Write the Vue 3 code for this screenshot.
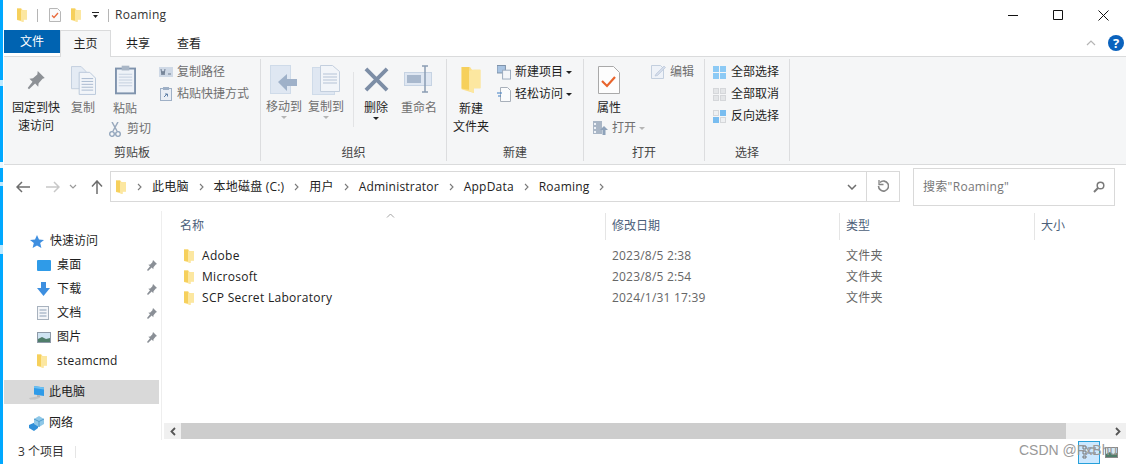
<script setup>
const navItems = [
  { label: '桌面', icon: 'desktop', pin: true },
  { label: '下载', icon: 'download', pin: true },
  { label: '文档', icon: 'doc', pin: true },
  { label: '图片', icon: 'pic', pin: true },
  { label: 'steamcmd', icon: 'folder', pin: false },
]

const files = [
  { name: 'Adobe', date: '2023/8/5 2:38', type: '文件夹' },
  { name: 'Microsoft', date: '2023/8/5 2:54', type: '文件夹' },
  { name: 'SCP Secret Laboratory', date: '2024/1/31 17:39', type: '文件夹' },
]

const crumbs = ['此电脑', '本地磁盘 (C:)', '用户', 'Administrator', 'AppData', 'Roaming']
</script>

<template>
  <div class="window">
    <svg width="0" height="0" class="defs">
      <symbol id="folder" viewBox="0 0 10 14">
        <path d="M0 0.5h4.500l1 1.500H10v9.500H6.500V14L0 12z" fill="#fbe08c" />
        <path d="M0 0.5h4v11.800l-4-.6z" fill="#f6d05c" />
        <path d="M4 2.500l2.800-.5H10v9.500H6.500V14L4 13z" fill="#fce7a0" />
      </symbol>
      <symbol id="pin" viewBox="0 0 12 12">
        <path d="M7 1l4 4-1.200.6-2.300 2.600-.2 2-1.600-1.600L2 12 1 11l3-3.700L2.300 5.700l2-.2 2.100-2.300z" fill="#8a8f96" />
      </symbol>
    </svg>

    <header class="titlebar">
      <svg class="qa folder-a" width="10" height="14"><use href="#folder" /></svg>
      <span class="qa-sep"></span>
      <svg class="qa" width="12" height="14" viewBox="0 0 12 14">
        <path d="M.5.500h8l3 3v10H.5z" fill="#fafafa" stroke="#b7b7b7" />
        <path d="M3 7.500l2 2 4-4.500" fill="none" stroke="#e8693a" stroke-width="1.300" />
      </svg>
      <svg class="qa folder-b" width="10" height="14"><use href="#folder" /></svg>
      <svg class="qa drop" width="8" height="8" viewBox="0 0 8 8">
        <path d="M0 1h7v1H0zM1 4h5L3.500 7z" fill="#222" />
      </svg>
      <span class="qa-sep second"></span>
      <span class="title">Roaming</span>
      <div class="win-btns">
        <svg width="11" height="11" viewBox="0 0 11 11"><path d="M0 5.500h10" stroke="#111" /></svg>
        <svg width="11" height="11" viewBox="0 0 11 11"><path d="M.5.500h9v9h-9z" fill="none" stroke="#111" /></svg>
        <svg width="11" height="11" viewBox="0 0 11 11"><path d="M.5.500l10 10M10.500.500l-10 10" stroke="#111" /></svg>
      </div>
    </header>

    <nav class="tabs">
      <span class="tab-file">文件</span>
      <span class="tab active">主页</span>
      <span class="tab share">共享</span>
      <span class="tab view">查看</span>
      <svg class="collapse" width="10" height="6" viewBox="0 0 10 6">
        <path d="M1 5l4-4 4 4" fill="none" stroke="#b5b5b5" stroke-width="1.200" />
      </svg>
      <span class="help">?</span>
    </nav>

    <section class="ribbon">
      <!-- 剪贴板 -->
      <div class="group g-clip">
        <div class="group-body">
          <div class="big pin-btn">
            <svg width="20" height="21" viewBox="0 0 22 24">
              <path d="M13 1l8 8-2.500 1-4.500 5-.5 4-3.500-3.500L3 22l-1.500-1.500L7 13.500 3.500 10l4-.5 5-4.500z" fill="#8d9196" />
            </svg>
            <span class="lbl dark">固定到快<br />速访问</span>
          </div>
          <div class="big copy-btn">
            <svg width="25" height="29" viewBox="0 0 26 30">
              <path d="M.5.500h10l5 5v18H.5z" fill="#e4ebf4" stroke="#c3cfde" />
              <path d="M8.500 6.500h11l6 6v17h-17z" fill="#f2f5f9" stroke="#b9c8db" />
              <path d="M11 13h12M11 16h12M11 19h12M11 22h12M11 25h12" stroke="#a9b9cf" />
            </svg>
            <span class="lbl">复制</span>
          </div>
          <div class="big paste-btn">
            <svg width="21" height="30" viewBox="0 0 22 30">
              <rect x="1" y="3" width="20" height="26" fill="#eef2f8" stroke="#7f93ad" stroke-width="2" />
              <rect x="7" y="0" width="8" height="5" fill="#a9b6c6" />
              <path d="M4 9h14M4 12h14M4 15h14M4 18h14M4 21h14" stroke="#c3cfde" />
            </svg>
            <span class="lbl">粘贴</span>
            <span class="cut">
              <svg width="12" height="15" viewBox="0 0 12 15">
                <path d="M3 0l5 9M9 0L4 9" stroke="#98a8bc" stroke-width="1.500" />
                <circle cx="3" cy="12" r="2.300" fill="none" stroke="#8ea2ba" stroke-width="1.300" />
                <circle cx="9" cy="12" r="2.300" fill="none" stroke="#8ea2ba" stroke-width="1.300" />
              </svg>
              <span class="lbl">剪切</span>
            </span>
          </div>
          <div class="small-col clip-small">
            <div class="small">
              <svg width="14" height="10" viewBox="0 0 14 10">
                <rect width="14" height="10" fill="#cfd9e6" />
                <path d="M2 2l1 6 1-4 1 4 1-6M9 7h3" stroke="#6f7e92" fill="none" />
              </svg>
              <span class="lbl">复制路径</span>
            </div>
            <div class="small">
              <svg width="14" height="14" viewBox="-1 0 14 14">
                <rect x=".5" y="1.500" width="11" height="12" fill="#e9eef5" stroke="#9fb0c6" />
                <rect x="3" y="0" width="6" height="3" fill="#9fb0c6" />
                <path d="M4 10l3-3M5 7h2.500v2.500" stroke="#5d7ea6" fill="none" />
              </svg>
              <span class="lbl">粘贴快捷方式</span>
            </div>
          </div>
        </div>
        <div class="group-title">剪贴板</div>
      </div>

      <!-- 组织 -->
      <div class="group g-org">
        <div class="group-body">
          <div class="big move-btn">
            <svg width="28" height="30" viewBox="0 0 28 30">
              <rect x=".5" y=".5" width="20" height="28" fill="#dfe7f2" stroke="#cfdbe9" />
              <path d="M8 17l9-8v5h10v7H17v5z" fill="#9fb1c9" />
            </svg>
            <span class="lbl">移动到</span>
            <i class="caret light"></i>
          </div>
          <div class="big copyto-btn">
            <svg width="28" height="30" viewBox="0 0 28 30">
              <rect x=".5" y="2.500" width="22" height="27" fill="#dfe7f2" stroke="#cfdbe9" />
              <path d="M8.500.500h12l7 6v20h-19z" fill="#f2f5f9" stroke="#c3cfde" />
              <path d="M11 9h14M11 12h14M11 15h14M11 18h14" stroke="#b5c3d6" />
            </svg>
            <span class="lbl">复制到</span>
            <i class="caret light"></i>
          </div>
          <span class="inner-sep"></span>
          <div class="big del-btn">
            <svg width="25" height="25" viewBox="0 0 26 26">
              <path d="M2 2l22 22M24 2L2 24" stroke="#7d8ea6" stroke-width="4" />
            </svg>
            <span class="lbl dark">删除</span>
            <i class="caret"></i>
          </div>
          <div class="big rename-btn">
            <svg width="30" height="28" viewBox="0 0 30 28">
              <rect x=".5" y="7.500" width="27" height="13" fill="#dfe7f2" stroke="#c6d3e3" />
              <rect x="3" y="10" width="14" height="8" fill="#a8b8cd" />
              <path d="M18 1h6M18 27h6M21 1v26" stroke="#8b9db4" stroke-width="1.500" />
            </svg>
            <span class="lbl">重命名</span>
          </div>
        </div>
        <div class="group-title">组织</div>
      </div>

      <!-- 新建 -->
      <div class="group g-new">
        <div class="group-body">
          <div class="big newf-btn">
            <svg width="20" height="27" viewBox="0 0 10 14"><use href="#folder" /></svg>
            <span class="lbl dark">新建<br />文件夹</span>
          </div>
          <div class="small-col new-small">
            <div class="small">
              <svg width="14" height="15" viewBox="0 0 15 15">
                <rect x="0" y="0" width="9" height="8" fill="#a9c4e2" stroke="#7a8ea6" />
                <rect x="6" y="5" width="8.500" height="9.500" fill="#f4f6f9" stroke="#98a8bc" />
              </svg>
              <span class="lbl dark">新建项目</span>
              <i class="caret mini"></i>
            </div>
            <div class="small">
              <svg width="14" height="15" viewBox="0 0 14 15">
                <path d="M3.500.500h7l3 3v11h-10z" fill="#fafbfc" stroke="#a8b0ba" />
                <path d="M0 6h5M1 9h3" stroke="#3f7fc4" />
              </svg>
              <span class="lbl dark">轻松访问</span>
              <i class="caret mini"></i>
            </div>
          </div>
        </div>
        <div class="group-title">新建</div>
      </div>

      <!-- 打开 -->
      <div class="group g-open">
        <div class="group-body">
          <div class="big prop-btn">
            <svg width="22" height="28" viewBox="0 0 22 28">
              <path d="M.5.500h15l6 6v21H.5z" fill="#fdfdfd" stroke="#a9a9a9" />
              <path d="M4 15l5 5 8-9" fill="none" stroke="#e8642c" stroke-width="2.200" />
            </svg>
            <span class="lbl dark">属性</span>
            <span class="open-row">
              <svg width="16" height="15" viewBox="0 0 16 15">
                <rect width="9" height="13" fill="#a9b6c6" />
                <path d="M1 2h2v2H1zM1 6h2v2H1zM1 10h2v2H1z" fill="#eef2f8" />
                <path d="M11 5l4 4h-2.500v5h-3V9H7z" fill="#8ea2ba" />
              </svg>
              <span class="lbl">打开</span>
              <i class="caret light side"></i>
            </span>
          </div>
          <div class="small-col edit-small">
            <div class="small">
              <svg width="15" height="14" viewBox="0 0 15 14">
                <path d="M.5.500h9l3 3v10H.5z" fill="#eef2f8" stroke="#c3cfde" />
                <path d="M5 9l8-8 1.500 1.500-8 8L4 11z" fill="#d3dcea" stroke="#b5c3d6" stroke-width=".6" />
              </svg>
              <span class="lbl">编辑</span>
            </div>
          </div>
        </div>
        <div class="group-title">打开</div>
      </div>

      <!-- 选择 -->
      <div class="group g-select">
        <div class="group-body">
          <div class="small-col sel-small">
            <div class="small">
              <span class="sel-icon all"><i></i><i></i><i></i><i></i></span>
              <span class="lbl dark">全部选择</span>
            </div>
            <div class="small">
              <span class="sel-icon none"><i></i><i></i><i></i><i></i></span>
              <span class="lbl dark">全部取消</span>
            </div>
            <div class="small">
              <span class="sel-icon inv"><i></i><i></i><i></i><i></i></span>
              <span class="lbl dark">反向选择</span>
            </div>
          </div>
        </div>
        <div class="group-title">选择</div>
      </div>
    </section>

    <div class="navbar">
      <svg class="nav-back" width="14" height="12" viewBox="0 0 14 12">
        <path d="M6 1L1 6l5 5M1 6h13" fill="none" stroke="#6d6d6d" stroke-width="1.500" />
      </svg>
      <svg class="nav-fwd" width="14" height="12" viewBox="0 0 14 12">
        <path d="M8 1l5 5-5 5M13 6H0" fill="none" stroke="#c8c8c8" stroke-width="1.500" />
      </svg>
      <svg class="nav-down" width="8" height="5" viewBox="0 0 8 5">
        <path d="M1 1l3 3 3-3" fill="none" stroke="#9a9a9a" stroke-width="1.200" />
      </svg>
      <svg class="nav-up" width="12" height="14" viewBox="0 0 12 14">
        <path d="M1 6.500L6 1l5 5.500M6 1v13" fill="none" stroke="#6d6d6d" stroke-width="1.500" />
      </svg>
      <div class="address">
        <svg class="addr-folder" width="10" height="14"><use href="#folder" /></svg>
        <template v-for="c in crumbs" :key="c">
          <svg class="crumb-arrow" width="5" height="8" viewBox="0 0 5 8">
            <path d="M1 1l3 3-3 3" fill="none" stroke="#7a7a7a" stroke-width="1.100" />
          </svg>
          <span class="crumb">{{ c }}</span>
        </template>
        <svg class="crumb-arrow last" width="5" height="8" viewBox="0 0 5 8">
          <path d="M1 1l3 3-3 3" fill="none" stroke="#7a7a7a" stroke-width="1.100" />
        </svg>
        <svg class="addr-down" width="10" height="6" viewBox="0 0 10 6">
          <path d="M1 1l4 4 4-4" fill="none" stroke="#6e6e6e" stroke-width="1.500" />
        </svg>
        <span class="refresh">
          <svg width="12" height="13" viewBox="0 0 12 13">
            <path d="M3 2.500a5 5 0 1 1-1.500 3.500" fill="none" stroke="#858585" stroke-width="1.600" />
            <path d="M2 0v4.500h4.500" fill="none" stroke="#858585" stroke-width="1.300" />
          </svg>
        </span>
      </div>
      <div class="search">
        <span>搜索"Roaming"</span>
        <svg width="12" height="12" viewBox="0 0 12 12">
          <circle cx="7.500" cy="4.500" r="3.300" fill="none" stroke="#7a7a7a" stroke-width="1.500" />
          <path d="M5 7l-4 4" stroke="#7a7a7a" stroke-width="2" />
        </svg>
      </div>
    </div>

    <div class="main">
      <aside class="sidebar">
        <div class="tree-head quick">
          <svg width="14" height="13" viewBox="0 0 14 13">
            <path d="M7 0l2 4.500 5 .4-3.800 3.200L11.400 13 7 10.400 2.600 13l1.200-4.900L0 4.900l5-.4z" fill="#3f8fe0" />
          </svg>
          <span>快速访问</span>
        </div>
        <div v-for="item in navItems" :key="item.label" class="tree-item">
          <svg v-if="item.icon === 'desktop'" width="14" height="11" viewBox="0 0 14 11">
            <rect width="14" height="11" rx="1" fill="#2f9be8" />
          </svg>
          <svg v-else-if="item.icon === 'download'" width="13" height="14" viewBox="0 0 13 14">
            <path d="M4 0h5v6h4l-6.500 8L0 6h4z" fill="#3d8fe0" />
          </svg>
          <svg v-else-if="item.icon === 'doc'" width="12" height="14" viewBox="0 0 12 14">
            <rect x=".5" y=".5" width="11" height="13" fill="#f4f6f9" stroke="#a8b2be" />
            <path d="M2.500 4h7M2.500 7h7M2.500 10h7" stroke="#8da0b6" />
          </svg>
          <svg v-else-if="item.icon === 'pic'" width="14" height="11" viewBox="0 0 14 11">
            <rect width="14" height="11" fill="#8e9aa8" />
            <rect x="1" y="1" width="12" height="9" fill="#cfe4f2" />
            <path d="M1 7l4-2 4 2 4-1v4H1z" fill="#4f7d6a" />
          </svg>
          <svg v-else width="10" height="14"><use href="#folder" /></svg>
          <span class="item-label">{{ item.label }}</span>
          <svg v-if="item.pin" class="item-pin" width="12" height="12"><use href="#pin" /></svg>
        </div>
        <div class="tree-head pc">
          <svg width="16" height="15" viewBox="0 0 16 15">
            <path d="M0 13l8-1.500 4 1-6 2H1z" fill="#c4c4c4" />
            <path d="M5 1l10 1.500V11L5 9.500z" fill="#2f9be8" />
            <path d="M5 1l10 1.500v2L5 3z" fill="#6cc0f2" />
            <path d="M8 10h3v2H8z" fill="#b5b5b5" />
          </svg>
          <span>此电脑</span>
        </div>
        <div class="tree-head net">
          <svg width="16" height="15" viewBox="0 0 16 15">
            <path d="M0 9l9-4v7l-4 3-5-3z" fill="#2f8fd8" />
            <path d="M5 3l5-3 5 3v5l-5 3-5-3z" fill="#8fc8e8" />
            <path d="M5 3l5 2.500L15 3M10 5.500V11" fill="none" stroke="#4f9bcc" />
          </svg>
          <span>网络</span>
        </div>
      </aside>

      <div class="content">
        <svg class="sort" width="9" height="5" viewBox="0 0 9 5">
          <path d="M1 4.500l3.500-3.500L8 4.500" fill="none" stroke="#a3a3a3" />
        </svg>
        <div class="table-head">
          <span>名称</span>
          <span>修改日期</span>
          <span>类型</span>
          <span>大小</span>
        </div>
        <div class="rows">
          <div v-for="f in files" :key="f.name" class="row">
            <span class="name">
              <svg width="10" height="14"><use href="#folder" /></svg>
              {{ f.name }}
            </span>
            <span class="muted">{{ f.date }}</span>
            <span class="muted">{{ f.type }}</span>
          </div>
        </div>
        <div class="hscroll">
          <span class="sb-btn">
            <svg width="6" height="9" viewBox="0 0 6 9"><path d="M5 1L1.500 4.500 5 8" fill="none" stroke="#555" stroke-width="1.800" /></svg>
          </span>
          <span class="sb-thumb"></span>
          <span class="sb-btn right">
            <svg width="6" height="9" viewBox="0 0 6 9"><path d="M1 1l3.500 3.500L1 8" fill="none" stroke="#555" stroke-width="1.800" /></svg>
          </span>
        </div>
      </div>
    </div>

    <footer class="status">
      <span class="count">3 个项目</span>
      <span class="status-sep"></span>
      <span class="view-a">
        <svg width="14" height="14" viewBox="0 0 14 14">
          <path d="M1 1h3v3H1zM1 6h3v3H1zM1 11h3v2H1z" fill="none" stroke="#777" />
          <path d="M6 3h8M6 8h8" stroke="#777" />
        </svg>
      </span>
      <svg class="view-b" width="13" height="11" viewBox="0 0 13 11">
        <rect x=".5" y=".5" width="12" height="10" fill="#d5e8f3" stroke="#8a8a8a" />
        <path d="M1 7l4-2 3 2 4-1v4H1z" fill="#4f7d6a" />
      </svg>
      <span class="watermark">CSDN @FxBhu</span>
    </footer>
  </div>
</template>

<style>
html,
body {
  margin: 0;
  background: #fff;
}
</style>

<style scoped>
.window {
  position: relative;
  width: 1126px;
  height: 464px;
  overflow: hidden;
  box-sizing: border-box;
  padding-left: 4px;
  display: flex;
  flex-direction: column;
  background: #fff;
  color: #1e1e1e;
  font-family: "Open Sans", "Noto Sans CJK SC", sans-serif;
  font-size: 12px;
  line-height: 16px;
}
.window::before {
  content: "";
  position: absolute;
  left: 0;
  top: 0;
  bottom: 0;
  width: 3px;
  background:
    linear-gradient(#bfeaff, #bfeaff) 0 80px / 3px 6px no-repeat,
    linear-gradient(#e8f7ff, #e8f7ff) 0 162px / 3px 6px no-repeat,
    linear-gradient(#bfeaff, #bfeaff) 0 182px / 3px 4px no-repeat,
    linear-gradient(#bfeaff, #bfeaff) 0 245px / 3px 9px no-repeat,
    #00a8ff;
}
.defs {
  position: absolute;
}

/* title bar */
.titlebar {
  height: 30px;
  display: flex;
  align-items: center;
  flex-shrink: 0;
}
.qa {
  flex-shrink: 0;
}
.folder-a {
  margin-left: 13px;
}
.qa-sep {
  width: 1px;
  height: 13px;
  background: #b5b5b5;
  margin: 0 11px 0 10px;
}
.folder-b {
  margin-left: 10px;
}
.drop {
  margin-left: 11px;
}
.qa-sep.second {
  margin: 0 6px 0 8px;
}
.title {
  font-size: 12px;
  letter-spacing: 0.3px;
  color: #333;
}
.win-btns {
  margin-left: auto;
  width: 101px;
  margin-right: 17px;
  display: flex;
  justify-content: space-between;
}

/* tabs */
.tabs {
  height: 27px;
  box-sizing: border-box;
  display: flex;
  flex-shrink: 0;
  align-items: flex-start;
  border-bottom: 1px solid #dadbdc;
}
.tab-file {
  width: 56px;
  height: 23px;
  line-height: 23px;
  text-align: center;
  background: #0063b1;
  color: #fff;
}
.tab {
  height: 26px;
  line-height: 27px;
}
.tab.active {
  width: 51px;
  box-sizing: border-box;
  text-align: center;
  background: #f5f6f7;
  border: 1px solid #dadbdc;
  border-bottom: 0;
  margin-bottom: -1px;
  height: 27px;
  line-height: 25px;
}
.tab.share {
  margin-left: 15px;
}
.tab.view {
  margin-left: 27px;
}
.collapse {
  margin: 10px 0 0 auto;
}
.help {
  width: 16px;
  height: 16px;
  border-radius: 50%;
  background: #0a62bd;
  color: #fff;
  font-weight: 700;
  font-size: 13px;
  line-height: 16px;
  text-align: center;
  margin: 5px 2px 0 12px;
}

/* ribbon */
.ribbon {
  height: 108px;
  flex-shrink: 0;
  box-sizing: border-box;
  background: #f5f6f7;
  border-bottom: 1px solid #dadbdc;
  display: flex;
  padding-top: 2px;
}
.group {
  display: flex;
  flex-direction: column;
  height: 102px;
  border-right: 1px solid #dcdddf;
  box-sizing: border-box;
}
.group-body {
  flex: 1;
  display: flex;
  position: relative;
}
.group-title {
  text-align: center;
  color: #444;
  height: 16px;
  line-height: 16px;
}
.g-clip { width: 257px; }
.g-org { width: 186px; }
.g-new { width: 137px; }
.g-open { width: 121px; }
.g-select { width: 85px; }
.lbl {
  color: #6f6f6f;
  white-space: nowrap;
}
.lbl.dark {
  color: #1e1e1e;
}
.big {
  display: flex;
  flex-direction: column;
  align-items: center;
  padding-top: 6px;
  box-sizing: border-box;
}
.big svg {
  flex-shrink: 0;
}
.pin-btn {
  width: 60px;
  margin-left: 2px;
  padding-top: 11px;
  text-align: center;
}
.pin-btn .lbl {
  line-height: 18px;
  margin-top: 8px;
}
.copy-btn {
  width: 36px;
  margin-left: -1px;
  padding-top: 7px;
}
.copy-btn .lbl {
  margin-top: 5px;
}
.paste-btn > .lbl {
  margin-top: 6px;
}
.paste-btn {
  width: 46px;
  margin-left: 1px;
}
.cut {
  display: flex;
  align-items: center;
  gap: 6px;
  margin: 4px 0 0 10px;
}
.small-col {
  display: flex;
  flex-direction: column;
  gap: 6px;
}
.small {
  display: flex;
  align-items: center;
  height: 16px;
  gap: 4px;
  white-space: nowrap;
}
.clip-small {
  margin: 5px 0 0 11px;
}
.move-btn {
  width: 48px;
  margin-left: -1px;
}
.copyto-btn {
  width: 42px;
  margin-left: -3px;
}
.move-btn .lbl,
.copyto-btn .lbl {
  margin-top: 4px;
}
.move-btn .caret,
.copyto-btn .caret {
  margin-top: 1px;
}
.caret {
  width: 0;
  height: 0;
  border-left: 3px solid transparent;
  border-right: 3px solid transparent;
  border-top: 3px solid #222;
  margin-top: 4px;
  display: block;
}
.caret.light {
  border-top-color: #b5b5b5;
}
.caret.mini {
  margin: 0 0 0 -1px;
}
.caret.side {
  margin: 0;
}
.inner-sep {
  width: 1px;
  height: 55px;
  background: #e2e3e5;
  margin: 13px 0 0 6px;
}
.del-btn {
  width: 44px;
  padding-top: 8px;
}
.del-btn .lbl {
  margin-top: 8px;
}
.del-btn .caret {
  margin-top: 1px;
}
.rename-btn {
  width: 40px;
  margin-left: 1px;
  padding-top: 6px;
}
.rename-btn .lbl {
  margin-top: 7px;
}
.newf-btn {
  width: 48px;
  margin-left: 0;
  padding-top: 7px;
}
.newf-btn .lbl {
  margin-top: 7px;
  line-height: 18px;
  text-align: center;
}
.new-small {
  margin: 5px 0 0 2px;
}
.prop-btn {
  width: 50px;
  padding-top: 7px;
  margin-left: 4px;
  align-items: flex-start;
}
.prop-btn > svg {
  margin-left: 10px;
}
.prop-btn > .lbl {
  margin: 6px 0 0 9px;
}
.open-row {
  display: flex;
  align-items: center;
  gap: 3px;
  margin: 4px 0 0 5px;
}
.edit-small {
  margin: 5px 0 0 13px;
}
.sel-small {
  margin: 5px 0 0 8px;
  gap: 6px;
}
.sel-small .small {
  gap: 5px;
}
.sel-icon {
  width: 13px;
  height: 13px;
  display: grid;
  grid-template-columns: 6px 6px;
  grid-template-rows: 6px 6px;
  gap: 1px;
}
.sel-icon i {
  display: block;
}
.sel-icon.all i {
  background: #8ccaf5;
}
.sel-icon.none i {
  background: #e4e6e8;
  border: 1px solid #d5d7da;
  box-sizing: border-box;
}
.sel-icon.inv i {
  background: #eef0f2;
  border: 1px solid #d5d7da;
  box-sizing: border-box;
}
.sel-icon.inv i:nth-child(2),
.sel-icon.inv i:nth-child(3) {
  background: #79bdf0;
  border-color: #79bdf0;
}

/* navigation bar */
.navbar {
  height: 46px;
  flex-shrink: 0;
  display: flex;
  align-items: center;
  box-sizing: border-box;
  padding-bottom: 3px;
}
.nav-back {
  margin-left: 12px;
}
.nav-fwd {
  margin-left: 16px;
}
.nav-down {
  margin-left: 9px;
}
.nav-up {
  margin-left: 14px;
}
.address {
  margin-left: 7px;
  width: 790px;
  height: 31px;
  box-sizing: border-box;
  border: 1px solid #d9d9d9;
  display: flex;
  align-items: center;
  padding-left: 5px;
}
.addr-folder {
  margin-right: 1px;
}
.crumb-arrow {
  margin: 0 10px;
}
.crumb {
  color: #222;
  letter-spacing: 0.2px;
  white-space: nowrap;
}
.addr-down {
  margin-left: auto;
  margin-right: 9px;
}
.refresh {
  width: 33px;
  height: 29px;
  border-left: 1px solid #d9d9d9;
  display: flex;
  align-items: center;
  justify-content: center;
  box-sizing: border-box;
}
.search {
  margin-left: 13px;
  width: 202px;
  height: 38px;
  box-sizing: border-box;
  border: 1px solid #d9d9d9;
  display: flex;
  align-items: center;
  justify-content: space-between;
  padding: 0 9px;
  color: #777;
  letter-spacing: 0.3px;
}

/* main */
.main {
  height: 229px;
  flex-shrink: 0;
  display: flex;
}
.sidebar {
  width: 158px;
  box-sizing: border-box;
  border-right: 1px solid #eeeeee;
  padding-top: 18px;
}
.tree-head {
  display: flex;
  align-items: center;
  height: 24px;
  gap: 6px;
  padding-left: 26px;
  margin-right: 2px;
}
.tree-head.pc {
  margin-top: 7px;
  background: #d9d9d9;
  padding-left: 25px;
  gap: 4px;
}
.tree-head.net {
  margin-top: 7px;
  padding-left: 25px;
  gap: 4px;
}
.tree-item {
  height: 24px;
  display: flex;
  align-items: center;
  position: relative;
  padding-left: 33px;
}
.tree-item > svg:first-child {
  flex-shrink: 0;
}
.item-label {
  position: absolute;
  left: 53px;
  letter-spacing: 0.25px;
}
.item-pin {
  position: absolute;
  left: 142px;
  top: 6px;
}
.content {
  flex: 1;
  position: relative;
  display: flex;
  flex-direction: column;
  min-width: 0;
}
.sort {
  position: absolute;
  left: 224px;
  top: 2px;
}
.table-head {
  height: 27px;
  margin-top: 2px;
  display: grid;
  grid-template-columns: 443px 234px 195px 1fr;
  color: #4c607a;
  flex-shrink: 0;
}
.table-head span {
  padding: 5px 0 0 6px;
  border-left: 1px solid #e5e5e5;
}
.table-head span:first-child {
  border-left: 0;
  padding-left: 18px;
}
.rows {
  margin-top: 5px;
  flex: 1;
}
.row {
  height: 21px;
  display: grid;
  grid-template-columns: 443px 234px 1fr;
  align-items: center;
}
.name {
  display: flex;
  align-items: center;
  gap: 8px;
  padding-left: 22px;
  color: #222;
  letter-spacing: 0.3px;
}
.muted {
  padding-left: 7px;
  color: #666;
  letter-spacing: 0.2px;
}
.hscroll {
  height: 16px;
  margin-left: 2px;
  margin-bottom: 1px;
  display: flex;
  background: #f0f0f0;
  flex-shrink: 0;
}
.sb-btn {
  width: 17px;
  display: flex;
  align-items: center;
  justify-content: center;
  flex-shrink: 0;
}
.sb-btn.right {
  margin-left: auto;
}
.sb-thumb {
  width: 885px;
  background: #cdcdcd;
}

/* status bar */
.status {
  flex: 1;
  display: flex;
  align-items: center;
  position: relative;
}
.count {
  margin-left: 14px;
  color: #333;
}
.status-sep {
  width: 1px;
  height: 12px;
  background: #e5e5e5;
  margin-left: 11px;
}
.view-a {
  margin-left: auto;
  width: 22px;
  height: 23px;
  box-sizing: border-box;
  background: #cce8ff;
  border: 1px solid #26a0da;
  display: flex;
  align-items: center;
  justify-content: center;
}
.view-b {
  margin: 0 8px 0 5px;
}
.watermark {
  position: absolute;
  left: 1015px;
  top: 2px;
  font-family: "Liberation Sans", sans-serif;
  font-size: 14px;
  color: #999;
  white-space: nowrap;
}
</style>
